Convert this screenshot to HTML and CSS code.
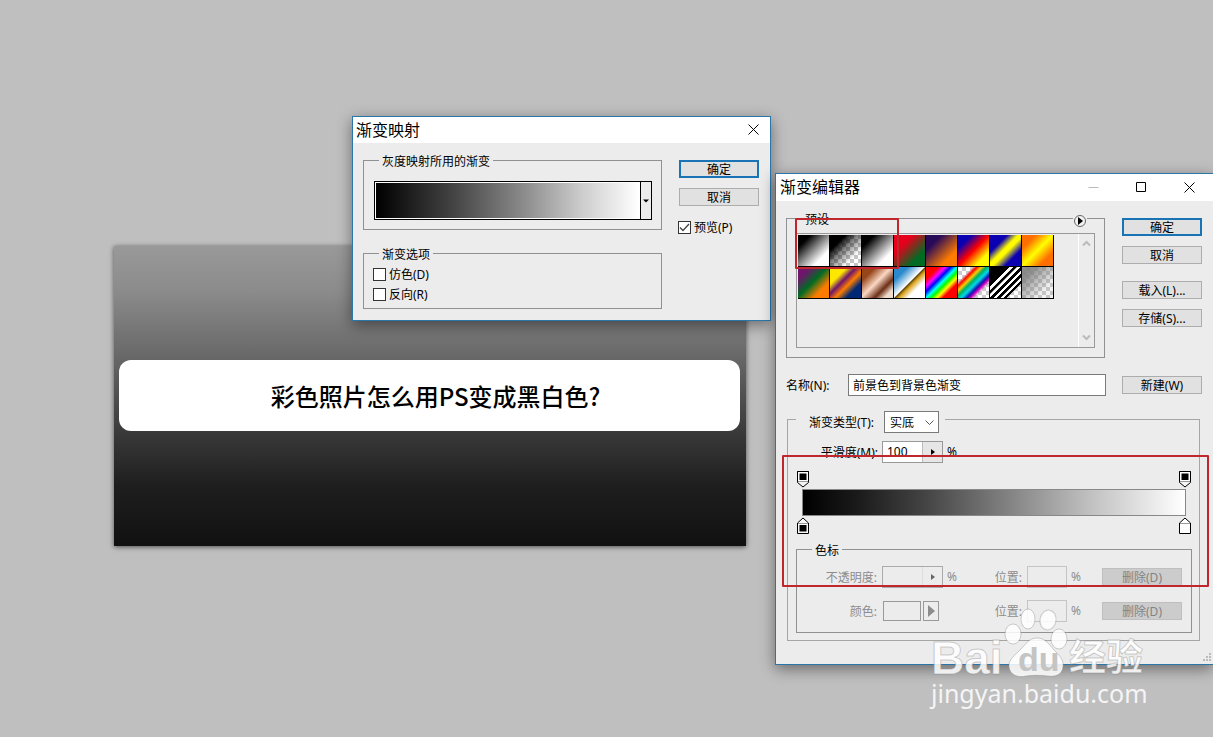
FILE: index.html
```html
<!DOCTYPE html>
<html lang="zh-CN">
<head>
<meta charset="utf-8">
<title>渐变映射</title>
<link rel="stylesheet" href="styles.css">
</head>
<body>
<main class="desktop">
  <section class="artboard">
    <h1 class="banner">彩色照片怎么用PS变成黑白色?</h1>
  </section>

  <section class="window map-window" aria-label="渐变映射">
    <header class="titlebar">
      <h2 class="window-title">渐变映射</h2>
      <button class="caption-button" type="button" aria-label="关闭"><svg width="11" height="11" viewBox="0 0 11 11"><path d="M0.5 0.5L10.5 10.5M10.5 0.5L0.5 10.5"/></svg></button>
    </header>
    <div class="window-body">
      <div class="columns">
        <div class="stack">
          <fieldset class="group map-group">
            <legend>灰度映射所用的渐变</legend>
            <div class="gradient-picker">
              <div class="picker-ramp"></div>
              <button class="picker-arrow" type="button" aria-label="选择渐变"><svg width="6" height="4" viewBox="0 0 6 4"><path d="M0 0.5H6L3 3.5Z"/></svg></button>
            </div>
          </fieldset>
          <fieldset class="group options-group">
            <legend>渐变选项</legend>
            <label class="check"><input type="checkbox"><span class="check-text">仿色(D)</span></label>
            <label class="check"><input type="checkbox"><span class="check-text">反向(R)</span></label>
          </fieldset>
        </div>
        <div class="actions">
          <button class="button primary" type="button">确定</button>
          <button class="button" type="button">取消</button>
          <label class="check preview"><input type="checkbox" checked><span class="check-text">预览(P)</span></label>
        </div>
      </div>
    </div>
  </section>

  <section class="window editor-window" aria-label="渐变编辑器">
    <header class="titlebar">
      <h2 class="window-title">渐变编辑器</h2>
      <button class="caption-button faded" type="button" aria-label="最小化"><svg width="11" height="11" viewBox="0 0 11 11"><path d="M0.5 5.5H10.5"/></svg></button>
      <button class="caption-button" type="button" aria-label="最大化"><svg width="11" height="11" viewBox="0 0 11 11"><path d="M0.5 0.5H9.5V9.5H0.5Z"/></svg></button>
      <button class="caption-button" type="button" aria-label="关闭"><svg width="11" height="11" viewBox="0 0 11 11"><path d="M0.5 0.5L10.5 10.5M10.5 0.5L0.5 10.5"/></svg></button>
    </header>
    <div class="window-body">
      <div class="columns">
        <fieldset class="group presets-group">
          <legend>预设</legend>
          <button class="flyout" type="button" aria-label="预设菜单"><svg width="14" height="14" viewBox="0 0 14 14"><circle cx="7" cy="7" r="5.5" fill="#f2f2f2" stroke="#666"/><path d="M5 3L10 7L5 11Z" fill="#000"/></svg></button>
          <div class="preset-box">
            <div class="preset-grid">
              <button class="swatch fore-back" type="button" aria-label="前景色到背景色渐变"></button>
              <button class="swatch fore-clear" type="button" aria-label="前景色到透明渐变"></button>
              <button class="swatch black-white" type="button" aria-label="黑白渐变"></button>
              <button class="swatch red-green" type="button" aria-label="红绿渐变"></button>
              <button class="swatch violet-orange" type="button" aria-label="紫橙渐变"></button>
              <button class="swatch blue-red-yellow" type="button" aria-label="蓝红黄渐变"></button>
              <button class="swatch blue-yellow-blue" type="button" aria-label="蓝黄蓝渐变"></button>
              <button class="swatch orange-yellow" type="button" aria-label="橙黄橙渐变"></button>
              <button class="swatch violet-green-orange" type="button" aria-label="紫绿橙渐变"></button>
              <button class="swatch yellow-violet" type="button" aria-label="黄紫橙蓝渐变"></button>
              <button class="swatch copper" type="button" aria-label="铜色渐变"></button>
              <button class="swatch chrome" type="button" aria-label="铬黄渐变"></button>
              <button class="swatch spectrum" type="button" aria-label="色谱"></button>
              <button class="swatch rainbow" type="button" aria-label="透明彩虹渐变"></button>
              <button class="swatch stripes" type="button" aria-label="透明条纹渐变"></button>
              <button class="swatch neutral" type="button" aria-label="中灰密度"></button>
            </div>
            <div class="scrollbar">
              <svg width="9" height="7" viewBox="0 0 9 7"><path d="M1 5.5L4.5 2L8 5.5"/></svg>
              <svg width="9" height="7" viewBox="0 0 9 7"><path d="M1 1.5L4.5 5L8 1.5"/></svg>
            </div>
          </div>
        </fieldset>
        <div class="actions">
          <button class="button primary" type="button">确定</button>
          <button class="button" type="button">取消</button>
          <button class="button file-button" type="button">载入(L)...</button>
          <button class="button" type="button">存储(S)...</button>
        </div>
      </div>

      <div class="name-row">
        <label class="name-label" for="name">名称(N):</label>
        <input class="field name-field" id="name" type="text" value="前景色到背景色渐变">
        <button class="button" type="button">新建(W)</button>
      </div>

      <fieldset class="group type-group">
        <legend class="type-legend">
          <label class="type-label" for="type">渐变类型(T):</label>
          <span class="select-wrap">
            <select class="select" id="type"><option>实底</option></select>
            <svg class="chevron" width="9" height="6" viewBox="0 0 9 6"><path d="M0.5 0.5L4.5 4.5L8.5 0.5"/></svg>
          </span>
        </legend>
        <div class="smooth-row">
          <label class="row-label" for="smooth">平滑度(M):</label>
          <span class="spin">
            <input class="spin-field" id="smooth" type="text" value="100">
            <button class="spin-button" type="button" aria-label="调整平滑度"><svg width="4" height="6" viewBox="0 0 4 6"><path d="M0 0L4 3L0 6Z"/></svg></button>
          </span>
          <span>%</span>
        </div>
        <div class="ramp">
          <div class="stops">
            <button class="stop" type="button" aria-label="起点不透明度"><svg width="12" height="17" viewBox="0 0 12 17"><path d="M.5 .5H11.5V11.5L6 16L.5 11.5Z" fill="#f4f4f4" stroke="#000"/><path d="M.5 .5H11.5V10.5H.5Z" fill="#fff" stroke="#000"/><path d="M1 10.5H11" stroke="#999"/><path d="M2.5 2.5H9.5V9H2.5Z"/></svg></button>
            <button class="stop" type="button" aria-label="终点不透明度"><svg width="12" height="17" viewBox="0 0 12 17"><path d="M.5 .5H11.5V11.5L6 16L.5 11.5Z" fill="#f4f4f4" stroke="#000"/><path d="M.5 .5H11.5V10.5H.5Z" fill="#fff" stroke="#000"/><path d="M1 10.5H11" stroke="#999"/><path d="M2.5 2.5H9.5V9H2.5Z"/></svg></button>
          </div>
          <div class="ramp-bar"></div>
          <div class="stops">
            <button class="stop" type="button" aria-label="起点颜色"><svg width="12" height="17" viewBox="0 0 12 17"><path d="M6 1L11.5 6V16.5H.5V6Z" fill="#f8f8f8" stroke="#000"/><path d="M1 6.5H11" stroke="#999"/><path d="M2.5 8H9.5V14.5H2.5Z"/></svg></button>
            <button class="stop" type="button" aria-label="终点颜色"><svg width="12" height="17" viewBox="0 0 12 17"><path d="M6 1L11.5 6V16.5H.5V6Z" fill="#fff" stroke="#000"/><path d="M1 6.5H11" stroke="#999"/></svg></button>
          </div>
        </div>
        <fieldset class="group stop-group" disabled>
          <legend>色标</legend>
          <div class="stop-grid">
            <label class="row-label" for="opacity">不透明度:</label>
            <span class="spin">
              <input class="spin-field" id="opacity" type="text">
              <button class="spin-button" type="button" aria-label="调整不透明度"><svg width="4" height="6" viewBox="0 0 4 6"><path d="M0 0L4 3L0 6Z"/></svg></button>
            </span>
            <span>%</span>
            <label class="row-label" for="opacity-position">位置:</label>
            <input class="field" id="opacity-position" type="text">
            <span>%</span>
            <button class="button" type="button">删除(D)</button>

            <span class="row-label">颜色:</span>
            <span class="color-pair">
              <button class="color-well" type="button" aria-label="颜色"></button>
              <button class="color-menu" type="button" aria-label="颜色菜单"><svg width="7" height="12" viewBox="0 0 7 12"><path d="M0 0L7 6L0 12Z"/></svg></button>
            </span>
            <span></span>
            <label class="row-label" for="color-position">位置:</label>
            <input class="field" id="color-position" type="text">
            <span>%</span>
            <button class="button" type="button">删除(D)</button>
          </div>
        </fieldset>
      </fieldset>
      <svg class="grip" width="10" height="10" viewBox="0 0 10 10"><path d="M7 0h2v2h-2zM4 3h2v2h-2zM7 3h2v2h-2zM1 6h2v2h-2zM4 6h2v2h-2zM7 6h2v2h-2z"/></svg>
    </div>
  </section>

  <div class="mark preset-mark"></div>
  <div class="mark ramp-mark"></div>

  <svg class="watermark" width="222" height="112" viewBox="0 0 222 112">
    <g class="wm-shape">
      <text class="wm-brand" x="3" y="71">Bai</text>
      <ellipse cx="85" cy="31" rx="8" ry="10"/>
      <ellipse cx="100" cy="16" rx="7" ry="10"/>
      <ellipse cx="120" cy="17" rx="8" ry="10" transform="rotate(10 120 17)"/>
      <ellipse cx="131" cy="36" rx="8" ry="10"/>
      <path d="M109 35C117 35 121 41 126 47C132 53 136 57 135 64C134 72 127 74 120 73C112 72 105 72 98 73C90 75 82 72 81 64C80 57 87 52 92 47C98 41 101 35 109 35Z"/>
      <text class="wm-cjk" x="141" y="68">经验</text>
      <text class="wm-url" x="3" y="100">jingyan.baidu.com</text>
    </g>
    <text class="wm-du" x="90" y="68">du</text>
  </svg>
</main>
</body>
</html>
```
FILE: styles.css
```css
* { box-sizing: border-box; }

body {
  margin: 0;
  background: #bfbfbf;
  color: #000;
  font: 12px/16px "Noto Sans", "Noto Sans CJK SC", sans-serif;
}

button, input, select { font: inherit; color: inherit; margin: 0; padding: 0; border-radius: 0; }
button { background: none; border: 0; }
svg { display: block; }

.desktop { position: relative; height: 100vh; overflow: hidden; }

.artboard {
  position: absolute;
  left: 114px;
  top: 246px;
  width: 632px;
  height: 300px;
  padding: 114px 6px 0 5px;
  background: linear-gradient(#999 0%, #8b8b8b 15%, #666 38%, #3a3a3a 62%, #1e1e1e 80%, #111 100%);
  box-shadow: 0 1px 5px rgba(0, 0, 0, .6);
}
.banner {
  margin: 0;
  padding: 18px 0 17px 12px;
  border-radius: 12px;
  background: #fff;
  font: 500 24px/36px "Noto Sans CJK SC", sans-serif;
  text-align: center;
}

.window {
  position: absolute;
  border: 1px solid #2a76ab;
  background: #ececec;
  box-shadow: 0 4px 14px rgba(0, 0, 0, .45);
}
.map-window { left: 352px; top: 116px; width: 419px; }
.editor-window { left: 775px; top: 173px; right: 0; border-right: 0; }

.titlebar { display: flex; align-items: center; height: 26px; padding: 0 11px 1px 3px; background: #fff; }
.editor-window .titlebar { height: 27px; padding-left: 4px; padding-right: 18px; gap: 37px; }
.window-title { flex: 1; margin: 0; padding-bottom: 2px; font: 16px/22px "Noto Sans CJK SC", sans-serif; }
.caption-button svg { fill: none; stroke: #000; }
.faded svg { stroke: #bbb; }

.window-body { position: relative; padding: 9px 11px 11px 10px; }
.editor-window .window-body { padding-bottom: 23px; }
.columns { display: grid; grid-template-columns: minmax(0, 1fr) 80px; gap: 17px; }
.stack { display: flex; flex-direction: column; gap: 15px; }

.group { min-width: 0; margin: 0; padding: 0 9px 0 10px; border: 1px solid #8f9193; }
.group legend { margin-left: 5px; padding: 4px 3px 0; line-height: 12px; }
.map-group { padding-top: 13px; padding-bottom: 9px; }
.options-group { padding-top: 3px; padding-bottom: 4px; padding-left: 9px; }
.options-group legend { margin-left: 6px; }

.gradient-picker { display: flex; height: 39px; border: 1px solid #000; }
.picker-ramp {
  flex: 1;
  border: 1px solid #fff;
  background: linear-gradient(90deg, #000, #454545 30%, #888 55%, #ccc 78%, #fff);
}
.picker-arrow { display: flex; align-items: center; justify-content: center; width: 11px; border-left: 1px solid #000; }

.check { display: flex; align-items: center; gap: 3px; height: 20px; }
.check-text { padding-top: 2px; }
.preview { margin: 1px 0 0 -1px; }
.check input { appearance: none; width: 13px; height: 13px; border: 1px solid #333; background: #fff; }
.check input:checked {
  background: #fff url("data:image/svg+xml,%3Csvg xmlns='http://www.w3.org/2000/svg' width='11' height='11'%3E%3Cpath d='M1 5.5L4 8.5L10 2' fill='none' stroke='%23444' stroke-width='1.3'/%3E%3C/svg%3E") center no-repeat;
}

.actions { display: flex; flex-direction: column; gap: 10px; padding-top: 8px; }
.button { width: 80px; height: 18px; padding-top: 2px; border: 1px solid #adadad; background: #e1e1e1; line-height: 14px; white-space: nowrap; }
.primary { border: 2px solid #1874b5; line-height: 12px; }
.file-button { margin-top: 7px; }

.presets-group { position: relative; padding-top: 7px; padding-bottom: 9px; padding-left: 9px; }
.presets-group legend { margin-left: 6px; }
.flyout { position: absolute; right: 17px; top: -12px; background: #ececec; }
.preset-box { display: flex; justify-content: space-between; height: 115px; border: 1px solid #999; padding-left: 1px; }
.preset-grid { display: grid; grid-template-columns: repeat(8, 32px); grid-auto-rows: 32px; align-content: start; padding-top: 1px; }
.swatch { border: solid #000; border-width: 0 1px 1px 0; background-origin: padding-box; }
.fore-back, .black-white { background: linear-gradient(135deg, #000 20%, #777 45%, #fff 75%); }
.fore-clear {
  background: linear-gradient(135deg, #000 25%, rgba(0, 0, 0, .5) 45%, transparent 75%),
    repeating-conic-gradient(#c4c4c4 0 25%, #fff 0 50%) 0 0 / 8px 8px;
}
.red-green { background: linear-gradient(135deg, #e6001c 30%, #006b22 75%); }
.violet-orange { background: linear-gradient(135deg, #290a59 25%, #ff7c00 75%); }
.blue-red-yellow { background: linear-gradient(135deg, #0a00b2 22%, #f00 50%, #fffc00 78%); }
.blue-yellow-blue { background: linear-gradient(135deg, #0a00b2 28%, #fffc00 46%, #fffc00 54%, #0a00b2 74%); }
.orange-yellow { background: linear-gradient(135deg, #ff6e00 22%, #ff0 50%, #ff6e00 78%); }
.violet-green-orange { background: linear-gradient(135deg, #6f156c 20%, #006b22 48%, #fd7c00 75%); }
.yellow-violet { background: linear-gradient(135deg, #fde600 28%, #6f156c 43%, #fd7c00 58%, #002874 76%); }
.copper { background: linear-gradient(135deg, #97461a 22%, #fbd8c5 48%, #6c2e16 70%, #efdbcd 86%); }
.chrome { background: linear-gradient(135deg, #2989cc 22%, #fff 49%, #5a4208 51%, #d9a21b 57%, #fff 72%); }
.spectrum { background: linear-gradient(135deg, #f00 20%, #f0f 31%, #00f 40%, #0ff 50%, #0f0 58%, #ff0 67%, #f00 77%); }
.rainbow {
  background: linear-gradient(135deg, transparent 24%, #f00 30%, #fc0 38%, #00b060 46%, #00d8e8 55%, #1212b0 64%, #d000c0 70%, transparent 77%),
    repeating-conic-gradient(#ccc 0 25%, #fff 0 50%) 0 0 / 8px 8px;
}
.stripes {
  background: linear-gradient(135deg, #000 31%, #fff 32% 37%, #000 38% 43%, #fff 44% 49%, #000 50% 55%, #fff 56% 60%, #000 61% 66%, #fff 67% 71%, #000 72% 76%, transparent 77%),
    repeating-conic-gradient(#ccc 0 25%, #fff 0 50%) 0 0 / 8px 8px;
}
.neutral {
  background: linear-gradient(135deg, rgba(128, 128, 128, .9) 20%, rgba(128, 128, 128, .1) 75%),
    repeating-conic-gradient(#ccc 0 25%, #fff 0 50%) 0 0 / 8px 8px;
}
.scrollbar {
  display: flex;
  flex-direction: column;
  align-items: center;
  justify-content: space-between;
  width: 16px;
  padding: 6px 0;
  border-left: 1px solid #fff;
}
.scrollbar svg { fill: none; stroke: #bbb; stroke-width: 2; }

.name-row { display: flex; align-items: center; padding-top: 16px; }
.name-label { width: 62px; padding-top: 1px; }
.field { min-width: 0; height: 22px; border: 1px solid #7a7a7a; background: #fff; padding: 0 4px; }
.name-field { flex: 1; margin-right: 16px; }

.type-group { margin: 10px 2px 0 1px; padding: 8px 7px 7px 8px; border-color: #a6a6a6; }
.group .type-legend { display: flex; align-items: center; gap: 4px; margin-left: 0; padding: 5px 6px 0 13px; }
.type-label { width: 71px; padding-top: 2px; line-height: 16px; }
.select-wrap { position: relative; display: block; }
.select { appearance: none; display: block; width: 55px; height: 22px; padding: 2px 5px 0; border: 1px solid #7a7a7a; background: #fff; }
.chevron { position: absolute; right: 5px; top: 9px; fill: none; stroke: #555; pointer-events: none; }

.smooth-row { display: flex; align-items: center; gap: 4px; }
.row-label { width: 82px; padding-top: 2px; text-align: right; }
.spin { display: flex; width: 61px; height: 22px; border: 1px solid #999; }
.spin-field { flex: 1; min-width: 0; padding: 0 4px; border: 0; background: #fff; }
.spin-button { display: flex; align-items: center; justify-content: center; width: 20px; border-left: 1px solid #bbb; background: #e6e6e6; }

.ramp { display: flex; flex-direction: column; gap: 1px; margin: 8px 1px 7px; }
.stops { display: flex; justify-content: space-between; }
.ramp-bar {
  height: 27px;
  margin: 0 5px;
  border: 1px solid #888;
  background: linear-gradient(90deg, #000, #1c1c1c 15%, #444 32%, #808080 53%, #c0c0c0 75%, #fff);
}

.stop-group { padding: 9px 9px 10px 0; }
.stop-group legend { margin-left: 15px; }
.stop-grid {
  display: grid;
  grid-template-columns: 80px 61px 40px minmax(0, 1fr) 40px 27px 80px;
  column-gap: 4px;
  row-gap: 12px;
  align-items: center;
  padding-left: 1px;
  color: #8c8c8c;
}
.stop-grid .row-label { width: auto; padding-right: 1px; }
.stop-grid .field { width: 40px; border-color: #c4c4c4; background: #ececec; }
.stop-grid .spin { border-color: #aaa; }
.stop-grid .spin-field { background: #ececec; }
.stop-grid .spin-button { background: #ececec; fill: #666; border-left-color: #ddd; }
.stop-grid .button { border-color: #bfbfbf; background: #ccc; color: #838383; }
.color-pair { display: flex; gap: 2px; padding-left: 1px; height: 20px; }
.color-well { width: 38px; border: 1px solid #999; }
.color-menu { display: flex; align-items: center; justify-content: center; width: 16px; border: 1px solid #999; fill: #8c8c8c; }
.grip { position: absolute; right: 1px; bottom: 1px; fill: #bbb; }

.mark { position: absolute; border: 2px solid #c0272d; border-radius: 1px; pointer-events: none; }
.preset-mark { left: 795px; top: 218px; width: 104px; height: 51px; }
.ramp-mark { left: 782px; top: 455px; width: 427px; height: 132px; }

.watermark { position: absolute; left: 928px; top: 603px; overflow: visible; pointer-events: none; }
.wm-shape { fill: #fff; fill-opacity: .85; stroke: #777; stroke-opacity: .35; stroke-width: 1; }
.wm-brand { font: bold 46px "Liberation Sans", sans-serif; }
.wm-cjk { font: bold 37px "Noto Sans CJK SC", sans-serif; }
.wm-url { font: 25px "Noto Sans", sans-serif; stroke: none; }
.wm-du { font: bold 34px "Liberation Sans", sans-serif; fill: #c4c4c4; }
```
